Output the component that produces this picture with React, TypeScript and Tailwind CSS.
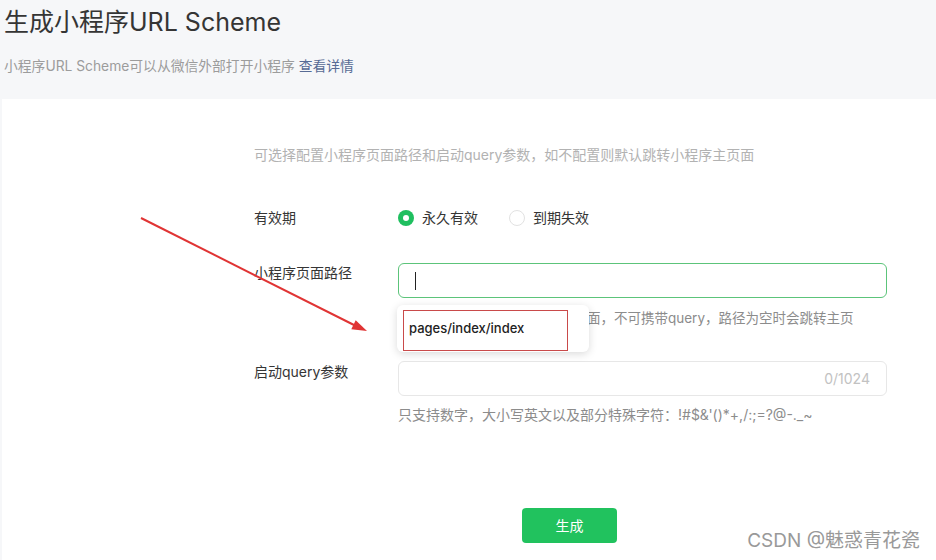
import React from "react";

const FONT = { fontFamily: 'Inter, "Noto Sans CJK SC", sans-serif' };

function Radio({ checked, label }: { checked: boolean; label: string }) {
  return (
    <label className="flex items-center gap-2 text-sm text-[#353535]">
      {checked ? (
        <span className="w-4 h-4 rounded-full bg-[#1fbf5f] flex items-center justify-center">
          <span className="w-[6px] h-[6px] rounded-full bg-white" />
        </span>
      ) : (
        <span className="w-4 h-4 rounded-full border border-[#e2e2e2] bg-white" />
      )}
      <span>{label}</span>
    </label>
  );
}

export default function App() {
  return (
    <div className="relative w-[936px] h-[560px] bg-[#f6f7f9] flex flex-col overflow-hidden" style={FONT}>
      {/* header */}
      <div className="pl-1 pt-[7px] h-[99px] shrink-0">
        <h1 className="text-[25px] leading-[31px] text-[#353535]">生成小程序URL Scheme</h1>
        <p className="mt-[18px] text-[13.8px] leading-5 text-[#9c9c9c]">
          小程序URL Scheme可以从微信外部打开小程序 <a className="text-[#576b95]">查看详情</a>
        </p>
      </div>

      {/* card */}
      <div className="flex-1 ml-[2px] bg-white pt-[46px] pl-[252px]">
        <p className="text-sm leading-5 text-[#b2b2b2]">
          可选择配置小程序页面路径和启动query参数，如不配置则默认跳转小程序主页面
        </p>

        <div className="mt-[43px] flex items-center">
          <div className="w-[144px] text-sm leading-5 text-[#353535]">有效期</div>
          <div className="flex items-center gap-[31px]">
            <Radio checked label="永久有效" />
            <Radio checked={false} label="到期失效" />
          </div>
        </div>

        <div className="mt-[35px] flex">
          <div className="w-[144px] text-sm leading-5 text-[#353535]">小程序页面路径</div>
          <div className="relative w-[489px]">
            <div className="h-[35px] rounded-md border border-[#5cc47a] flex items-center pl-4">
              <span className="w-px h-[18px] bg-[#222]" />
            </div>
            <p className="mt-[10px] text-[13.5px] leading-5 text-[#8c8c8c] whitespace-nowrap">
              需为已发布的小程序中存在的页面，不可携带query，路径为空时会跳转主页
            </p>
            <div className="absolute left-[-1px] top-[42px] w-[192px] h-[47px] bg-white rounded-md shadow-[0_2px_8px_rgba(0,0,0,0.15)] pl-[6px] pt-[5px]">
              <div className="w-[165px] h-[41px] border border-[#c94a4a] pl-[5px] pt-[7px] text-[13px] leading-5 font-medium text-[#222]">
                pages/index/index
              </div>
            </div>
          </div>
        </div>

        <div className="mt-[33px] flex">
          <div className="w-[144px] text-sm leading-5 text-[#353535] pt-px">启动query参数</div>
          <div className="w-[489px]">
            <div className="h-[35px] rounded-md border border-[#e7e7e7] flex items-center justify-end pr-4 text-sm text-[#c2c2c2]">
              0/1024
            </div>
            <p className="mt-[9px] text-sm leading-5 text-[#8c8c8c] whitespace-nowrap">
              只支持数字，大小写英文以及部分特殊字符：!#$&amp;'()*+,/:;=?@-._~
            </p>
          </div>
        </div>

        <div className="mt-[83px] ml-[268px]">
          <button className="w-[95px] h-[35px] rounded bg-[#21c25e] text-white text-sm">生成</button>
        </div>
      </div>

      {/* annotation arrow */}
      <svg className="absolute left-0 top-0 pointer-events-none" width="936" height="560">
        <line x1="141" y1="218" x2="356" y2="326" stroke="#e03434" strokeWidth="2" />
        <polygon points="367,331 355.7,320.2 351.3,329.2" fill="#e03434" />
      </svg>

      <div className="absolute right-[16px] bottom-[7px] text-[19px] leading-6 text-[#999]">
        CSDN @魅惑青花瓷
      </div>
    </div>
  );
}
